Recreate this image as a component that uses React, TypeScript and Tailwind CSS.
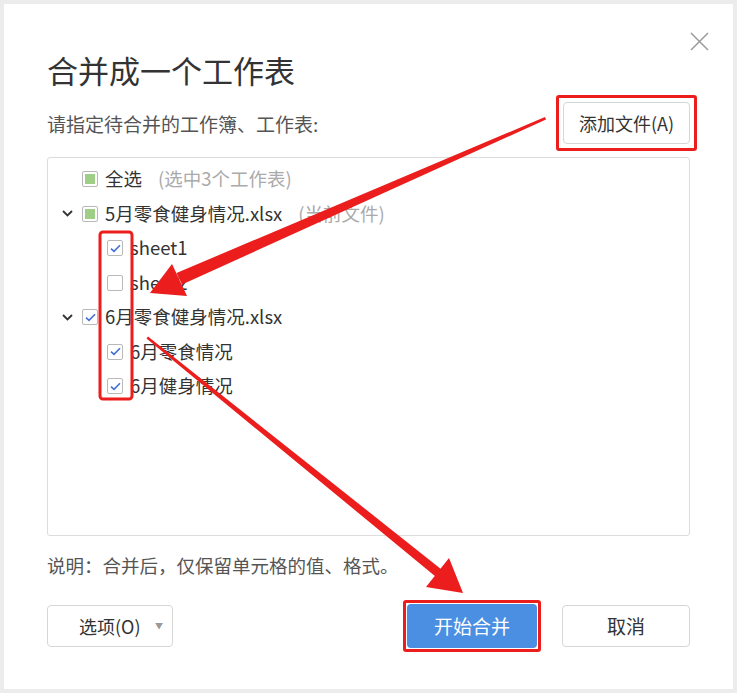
import { useState } from 'react'

const FONT = { fontFamily: '"Noto Sans CJK SC", "Noto Sans", sans-serif' }

type Mark = 'none' | 'checked' | 'partial'

function Box({ mark }: { mark: Mark }) {
  return (
    <span className="flex h-[16px] w-[16px] shrink-0 items-center justify-center rounded-[2px] border border-[#b9b9b9] bg-white">
      {mark === 'partial' && <span className="h-[10px] w-[10px] bg-[#9fcf86]" />}
      {mark === 'checked' && (
        <svg width="11" height="9" viewBox="0 0 11 9" fill="none">
          <path d="M1 4.6 L4 7.4 L10 1.2" stroke="#4370d8" strokeWidth="1.6" />
        </svg>
      )}
    </span>
  )
}

function Chevron() {
  return (
    <svg width="11" height="7" viewBox="0 0 11 7" fill="none">
      <path d="M1 1 L5.5 5.5 L10 1" stroke="#333" strokeWidth="1.8" />
    </svg>
  )
}

type Row = {
  label: string
  note?: string
  mark: Mark
  level: 0 | 1
  folder?: boolean
}

const rows: Row[] = [
  { label: '全选', note: '(选中3个工作表)', mark: 'partial', level: 0 },
  { label: '5月零食健身情况.xlsx', note: '(当前文件)', mark: 'partial', level: 0, folder: true },
  { label: 'sheet1', mark: 'checked', level: 1 },
  { label: 'sheet2', mark: 'none', level: 1 },
  { label: '6月零食健身情况.xlsx', mark: 'checked', level: 0, folder: true },
  { label: '6月零食情况', mark: 'checked', level: 1 },
  { label: '6月健身情况', mark: 'checked', level: 1 },
]

function TreeRow({ row }: { row: Row }) {
  return (
    <div className="flex h-[34.5px] items-center">
      <span className="flex w-[34px] shrink-0 items-center justify-center pl-[4px]">
        {row.folder && <Chevron />}
      </span>
      <span className={row.level === 1 ? 'flex items-center pl-[25px]' : 'flex items-center'}>
        <Box mark={row.mark} />
        <span className="ml-[7px] text-[18.5px] text-[#333]">{row.label}</span>
        {row.note && <span className="ml-[16px] text-[18.5px] text-[#aaa]">{row.note}</span>}
      </span>
    </div>
  )
}

// red marker outline drawn around a control
function Ring({ gap }: { gap: 'wide' | 'tight' }) {
  return (
    <span
      className={
        gap === 'wide'
          ? 'pointer-events-none absolute -inset-[7px] rounded-[3px] border-[3px] border-[#ec1d1d]'
          : 'pointer-events-none absolute -inset-[4px] rounded-[3px] border-[3px] border-[#ec1d1d]'
      }
    />
  )
}

function Arrows() {
  return (
    <svg
      className="pointer-events-none absolute left-0 top-0"
      width="737"
      height="693"
      viewBox="0 0 737 693"
    >
      <rect x="100" y="232" width="32" height="167" rx="3" fill="none" stroke="#ec1d1d" strokeWidth="3" />
      {/* arrow from the add-file button to the sheet list */}
      <polygon points="545,117 546,119.5 182,284.5 176.5,273" fill="#ec1d1d" />
      <polygon points="150,293 187,296 172,264" fill="#ec1d1d" />
      {/* arrow from the sheet list to the merge button */}
      <polygon points="146.5,338.5 148,336.5 441.5,569.5 435.5,576.5" fill="#ec1d1d" />
      <polygon points="463,593 426,587 449,558" fill="#ec1d1d" />
    </svg>
  )
}

export default function App() {
  const [open, setOpen] = useState(true)

  return (
    <div className="relative h-[693px] w-[737px] bg-[#ececec] p-[4px]" style={FONT}>
      <div className="relative flex h-[685px] w-[729px] flex-col bg-white px-[43px] pt-[46px]">
        <button
          onClick={() => setOpen(!open)}
          className="absolute right-[24px] top-[27px] flex h-[20px] w-[20px] items-center justify-center"
        >
          <svg width="19" height="19" viewBox="0 0 19 19" fill="none">
            <path d="M1 1 L18 18 M18 1 L1 18" stroke="#9a9a9a" strokeWidth="1.5" />
          </svg>
        </button>

        <h1 className="text-[31px] font-normal leading-[40px] text-[#333]">合并成一个工作表</h1>

        <div className="mt-[12px] flex items-center justify-between">
          <span className="pt-[3px] text-[19px] text-[#555]">请指定待合并的工作簿、工作表:</span>
          <span className="relative">
            <button className="h-[42px] w-[127px] rounded-[4px] border border-[#d6d6d6] bg-white text-[18px] text-[#333]">
              添加文件(A)
            </button>
            <Ring gap="wide" />
          </span>
        </div>

        <div className="mt-[13px] h-[379px] rounded-[3px] border border-[#dcdcdc] pt-[4px]">
          {rows.map((row) => (
            <TreeRow key={row.label} row={row} />
          ))}
        </div>

        <p className="mt-[18px] text-[18.5px] leading-[22px] text-[#555]">说明：合并后，仅保留单元格的值、格式。</p>

        <div className="mt-[28px] flex items-center justify-between">
          <button className="flex h-[42px] w-[126px] items-center rounded-[4px] border border-[#d6d6d6] bg-white pl-[31px] pr-[9px] text-[18px] text-[#333]">
            选项(O)
            <span className="ml-auto text-[8px] text-[#999]">▼</span>
          </button>
          <div className="flex items-center gap-[25px]">
            <span className="relative">
              <button className="h-[44px] w-[130px] rounded-[4px] bg-[#4b8fe2] text-[19px] text-white">开始合并</button>
              <Ring gap="tight" />
            </span>
            <button className="h-[42px] w-[128px] rounded-[4px] border border-[#d6d6d6] bg-white text-[19px] text-[#333]">
              取消
            </button>
          </div>
        </div>
      </div>
      <Arrows />
    </div>
  )
}
